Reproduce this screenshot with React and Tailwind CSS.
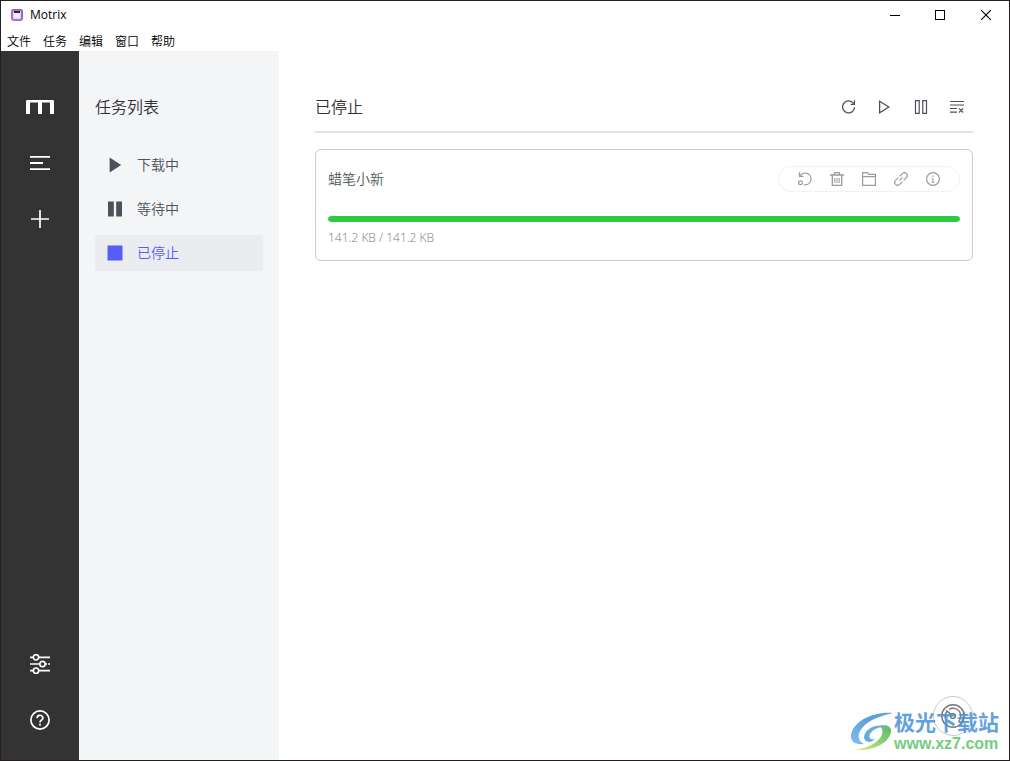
const stroke = { fill: 'none', stroke: 'currentColor', strokeLinecap: 'butt', strokeLinejoin: 'miter' };

const AppIcon = () => (
  <svg width="12" height="12" viewBox="0 0 12 12" aria-hidden="true">
    <defs>
      <linearGradient id="app-icon" x1="0" y1="1" x2="1" y2="0">
        <stop offset="0" stopColor="#b06adb" />
        <stop offset="1" stopColor="#7a62b8" />
      </linearGradient>
    </defs>
    <rect width="12" height="12" rx="2.4" fill="url(#app-icon)" />
    <rect x="1.8" y="1.8" width="8.4" height="8.4" rx="1.2" fill="#d9cdea" />
    <rect x="3" y="2" width="6" height="2" fill="#2b2438" />
    <rect x="3" y="4" width="6" height="5" fill="#f3f2ee" />
  </svg>
);

const Logo = () => (
  <svg width="28" height="14" viewBox="0 0 28 14" fill="#fff" aria-hidden="true">
    <path d="M1.2 0H26.8Q28 0 28 1.2V14H24V2.6H16V14H12V2.6H4V14H0V1.2Q0 0 1.2 0Z" />
  </svg>
);

const ListIcon = () => (
  <svg width="20" height="20" viewBox="0 0 20 20" {...stroke} strokeWidth="1.8" aria-hidden="true">
    <path d="M0 3.8H20M0 10H13M0 16.2H20" />
  </svg>
);

const PlusIcon = () => (
  <svg width="20" height="20" viewBox="0 0 20 20" {...stroke} strokeWidth="1.7" aria-hidden="true">
    <path d="M1 10H19M10 1V19" />
  </svg>
);

const TuneIcon = () => (
  <svg width="20" height="20" viewBox="0 0 20 20" {...stroke} strokeWidth="1.7" aria-hidden="true">
    <path d="M0 3.3H3M9 3.3H20M0 10H9.5M15.5 10H17M18.2 10H20M0 16.7H3M9 16.7H20" />
    <circle cx="6" cy="3.3" r="2.7" />
    <circle cx="12.5" cy="10" r="2.7" />
    <circle cx="6" cy="16.7" r="2.7" />
  </svg>
);

const HelpIcon = () => (
  <svg width="20" height="20" viewBox="0 0 20 20" {...stroke} strokeWidth="1.7" aria-hidden="true">
    <circle cx="10" cy="10" r="9.1" />
    <path d="M7.2 8.2A2.8 2.6 0 1 1 11.6 10Q10 11 10 12.6" />
    <path d="M9.1 14.6H10.9" />
  </svg>
);

const PlayIcon = () => (
  <svg width="20" height="20" viewBox="0 0 20 20" fill="currentColor" aria-hidden="true">
    <path d="M4.6 2.4L16.2 10L4.6 17.6Z" />
  </svg>
);

const PauseIcon = () => (
  <svg width="20" height="20" viewBox="0 0 20 20" fill="currentColor" aria-hidden="true">
    <path d="M3 2.5H8.8V17.5H3ZM11.2 2.5H17V17.5H11.2Z" />
  </svg>
);

const StopIcon = () => (
  <svg width="20" height="20" viewBox="0 0 20 20" fill="currentColor" aria-hidden="true">
    <path d="M2.5 2.5H17.5V17.5H2.5Z" />
  </svg>
);

const RefreshIcon = () => (
  <svg width="14" height="14" viewBox="0 0 14 14" {...stroke} strokeWidth="1.3" aria-hidden="true">
    <path d="M12.6 7.4A6 6 0 1 1 10.8 2.6L12 4" />
    <path d="M12.4 .4V4.4H8.6" />
  </svg>
);

const ResumeIcon = () => (
  <svg width="14" height="14" viewBox="0 0 14 14" {...stroke} strokeWidth="1.3" aria-hidden="true">
    <path d="M1.6 1.2L10.8 7L1.6 12.8Z" />
  </svg>
);

const PauseAllIcon = () => (
  <svg width="14" height="14" viewBox="0 0 14 14" {...stroke} strokeWidth="1.2" aria-hidden="true">
    <path d="M1.5 .6H5.2V13.4H1.5ZM8.8 .6H12.5V13.4H8.8Z" />
  </svg>
);

const PurgeIcon = () => (
  <svg width="14" height="14" viewBox="0 0 14 14" {...stroke} strokeWidth="1.2" aria-hidden="true">
    <path d="M0 1.5H14M0 5H14M0 8.5H7M0 12.2H7M9 8.3L13.2 12.5M13.2 8.3L9 12.5" />
  </svg>
);

const RestartIcon = () => (
  <svg width="14" height="14" viewBox="0 0 14 14" {...stroke} strokeWidth="1.2" aria-hidden="true">
    <path d="M2 3.9A5.9 5.9 0 1 1 6 12.8" />
    <path d="M1.4 .3V4.3H5.4" />
    <circle cx="2.5" cy="10.8" r="1.9" />
  </svg>
);

const TrashIcon = () => (
  <svg width="14" height="14" viewBox="0 0 14 14" {...stroke} strokeWidth="1.3" aria-hidden="true">
    <path d="M0 3H14M4.6 3V.7H9.4V3M2.3 3V13.3H11.7V3" />
    <path d="M4.8 6V11M7 6V11M9.2 6V11" strokeWidth="1" />
  </svg>
);

const FolderIcon = () => (
  <svg width="14" height="14" viewBox="0 0 14 14" {...stroke} strokeWidth="1.2" aria-hidden="true">
    <path d="M.6 13.4V.6H5.6L7 2.4H13.4V13.4ZM.6 4.7H13.4" />
  </svg>
);

const LinkIcon = () => (
  <svg width="14" height="14" viewBox="0 0 14 14" {...stroke} strokeWidth="1.2" aria-hidden="true">
    <path d="M5.6 4.4L8.4 1.6A2.8 2.8 0 0 1 12.4 5.6L9.6 8.4" />
    <path d="M8.4 9.6L5.6 12.4A2.8 2.8 0 0 1 1.6 8.4L4.4 5.6" />
    <path d="M5.4 8.6L8.6 5.4" />
  </svg>
);

const InfoIcon = () => (
  <svg width="14" height="14" viewBox="0 0 14 14" {...stroke} strokeWidth="1.2" aria-hidden="true">
    <circle cx="7" cy="7" r="6.4" />
    <path d="M7 3.4V4.8M5.8 6.3H7V10.2M5.6 10.2H8.4" strokeWidth="1" />
  </svg>
);

const SpeedIcon = () => (
  <svg width="26" height="26" viewBox="0 0 26 26" {...stroke} strokeWidth="1.4" aria-hidden="true">
    <circle cx="13" cy="13" r="11.2" />
    <path d="M6 16.4A7.6 7.6 0 0 1 6.6 8.8M9.2 6.4A7.6 7.6 0 0 1 18.6 18.2" />
    <circle cx="13" cy="13" r="2.4" />
    <path d="M11.2 11.4L6 7.4" />
  </svg>
);

const Swirl = () => (
  <svg width="44" height="42" viewBox="0 0 44 42" aria-hidden="true">
    <defs>
      <linearGradient id="swirl-blue" x1="1" y1="0" x2="0" y2="1">
        <stop offset="0" stopColor="#3f9fc6" />
        <stop offset="0.4" stopColor="#3f8fd6" />
        <stop offset="1" stopColor="#6cb4ea" />
      </linearGradient>
      <linearGradient id="swirl-green" x1="1" y1="0" x2="0" y2="1">
        <stop offset="0" stopColor="#3fae5c" />
        <stop offset="0.5" stopColor="#7cc95c" />
        <stop offset="1" stopColor="#e8e65a" />
      </linearGradient>
    </defs>
    <path d="M43 2C24 0 3 10 1 24C0 31 6 34 14 33C7 29 7 23 13 16C19 9 30 5 43 2Z" fill="url(#swirl-blue)" />
    <path d="M29 15C36 13 42 15 41 21C39 31 26 40 5 39C18 37 30 31 32 23C33 19 32 17 29 15Z" fill="url(#swirl-green)" />
    <path d="M38 16C28 12 15 17 14 26C14 31 20 33 25 28C21 29 18 27 20 23C23 18 30 15 38 16Z" fill="#4a9fdb" />
  </svg>
);

const menus = ['文件', '任务', '编辑', '窗口', '帮助'];

const filters = [
  { label: '下载中', Icon: PlayIcon },
  { label: '等待中', Icon: PauseIcon },
  { label: '已停止', Icon: StopIcon, active: true },
];

const listActions = [
  { label: '刷新', Icon: RefreshIcon },
  { label: '全部继续', Icon: ResumeIcon },
  { label: '全部暂停', Icon: PauseAllIcon },
  { label: '清除记录', Icon: PurgeIcon },
];

const taskActions = [
  { label: '重新开始', Icon: RestartIcon },
  { label: '删除', Icon: TrashIcon },
  { label: '打开文件夹', Icon: FolderIcon },
  { label: '复制链接', Icon: LinkIcon },
  { label: '详情', Icon: InfoIcon },
];

function RailButton({ label, children }) {
  return (
    <button type="button" aria-label={label} className="flex size-8 items-center justify-center">
      {children}
    </button>
  );
}

function TitleBar() {
  return (
    <header className="bg-white text-black">
      <div className="flex h-7 items-center pl-2.5">
        <AppIcon />
        <span className="ml-[7px] grow text-xs leading-7">Motrix</span>
        <div className="flex">
          <button type="button" aria-label="最小化" className="flex h-7 w-11 items-center justify-center">
            <svg width="10" height="10" viewBox="0 0 10 10" {...stroke} shapeRendering="crispEdges"><path d="M0 5.5H10" /></svg>
          </button>
          <button type="button" aria-label="最大化" className="flex h-7 w-[46px] items-center justify-center">
            <svg width="10" height="10" viewBox="0 0 10 10" {...stroke} shapeRendering="crispEdges"><path d="M.5 .5H9.5V9.5H.5Z" /></svg>
          </button>
          <button type="button" aria-label="关闭" className="flex h-7 w-[46px] items-center justify-center">
            <svg width="10" height="10" viewBox="0 0 10 10" {...stroke} strokeWidth="1.1"><path d="M0 0L10 10M10 0L0 10" /></svg>
          </button>
        </div>
      </div>
      <nav className="flex h-[22px] items-end gap-3 pl-1.5 text-xs font-[350]">
        {menus.map((m) => (
          <button key={m} type="button" className="leading-[18px]">{m}</button>
        ))}
      </nav>
    </header>
  );
}

export default function App() {
  return (
    <div className="relative flex min-h-screen flex-col border border-[#231f20] bg-white font-['Open_Sans','Noto_Sans_CJK_SC',sans-serif]">
      <TitleBar />
      <div className="flex grow">
        <aside className="flex w-[78px] shrink-0 flex-col items-center justify-between bg-[#333] pt-10 pb-6 text-white">
          <div className="flex flex-col gap-6">
            <RailButton label="Motrix"><Logo /></RailButton>
            <RailButton label="任务列表"><ListIcon /></RailButton>
            <RailButton label="新建任务"><PlusIcon /></RailButton>
          </div>
          <div className="flex flex-col gap-6">
            <RailButton label="偏好设置"><TuneIcon /></RailButton>
            <RailButton label="帮助"><HelpIcon /></RailButton>
          </div>
        </aside>

        <nav className="w-[200px] shrink-0 bg-[#f4f5f7] px-4 pt-11 font-[350]">
          <h1 className="text-base leading-6 text-[#303133]">任务列表</h1>
          <ul className="mt-7 flex flex-col gap-2">
            {filters.map(({ label, Icon, active }) => (
              <li key={label}>
                <a
                  href="#"
                  aria-current={active ? 'page' : undefined}
                  className={
                    active
                      ? 'flex h-9 items-center gap-3 rounded-[3px] bg-[#eaecf0] px-2.5 text-sm text-[#5b5bfa]'
                      : 'flex h-9 items-center gap-3 rounded-[3px] px-2.5 text-sm text-[#4d515a]'
                  }
                >
                  <Icon />
                  {label}
                </a>
              </li>
            ))}
          </ul>
        </nav>

        <main className="grow px-9 pt-11">
          <div className="flex h-[38px] items-start justify-between border-b-2 border-[#e2e2e2]">
            <h2 className="text-base leading-6 font-[350] text-[#303133]">已停止</h2>
            <div className="flex h-6 items-center gap-[22px] pr-[9px] text-[#4d515a]">
              {listActions.map(({ label, Icon }) => (
                <button key={label} type="button" aria-label={label} className="flex">
                  <Icon />
                </button>
              ))}
            </div>
          </div>

          <article className="mt-4 rounded-md border border-[#ccc] px-3 pt-4 pb-3.5">
            <div className="flex items-center justify-between">
              <h3 className="text-sm font-[350] text-[#505753]">蜡笔小新</h3>
              <div className="flex h-[26px] items-center gap-[18px] rounded-full border border-[#f2f2f2] px-[19px] text-[#9b9b9b]">
                {taskActions.map(({ label, Icon }) => (
                  <button key={label} type="button" aria-label={label} className="flex">
                    <Icon />
                  </button>
                ))}
              </div>
            </div>
            <div
              role="progressbar"
              aria-label="蜡笔小新"
              aria-valuenow={100}
              className="mt-6 h-1.5 overflow-hidden rounded-full bg-[#ebeef5]"
            >
              <div className="h-full w-full rounded-full bg-[#2acb42]" />
            </div>
            <p className="mt-2 text-xs font-light text-[#7d7d7d]">141.2 KB / 141.2 KB</p>
          </article>
        </main>
      </div>

      <button
        type="button"
        aria-label="速度"
        className="absolute right-9 bottom-6 flex size-10 items-center justify-center rounded-full border border-[#ccc] bg-white text-[#777]"
      >
        <SpeedIcon />
      </button>
      <div className="pointer-events-none absolute right-2.5 bottom-1.5 flex items-center opacity-85">
        <Swirl />
        <div className="flex flex-col">
          <span className="text-[21px] leading-6 font-bold text-[#4a90d9]">极光下载站</span>
          <span className="font-['Liberation_Sans',sans-serif] text-base leading-5 font-bold text-[#5cc46b]">www.xz7.com</span>
        </div>
      </div>
    </div>
  );
}
